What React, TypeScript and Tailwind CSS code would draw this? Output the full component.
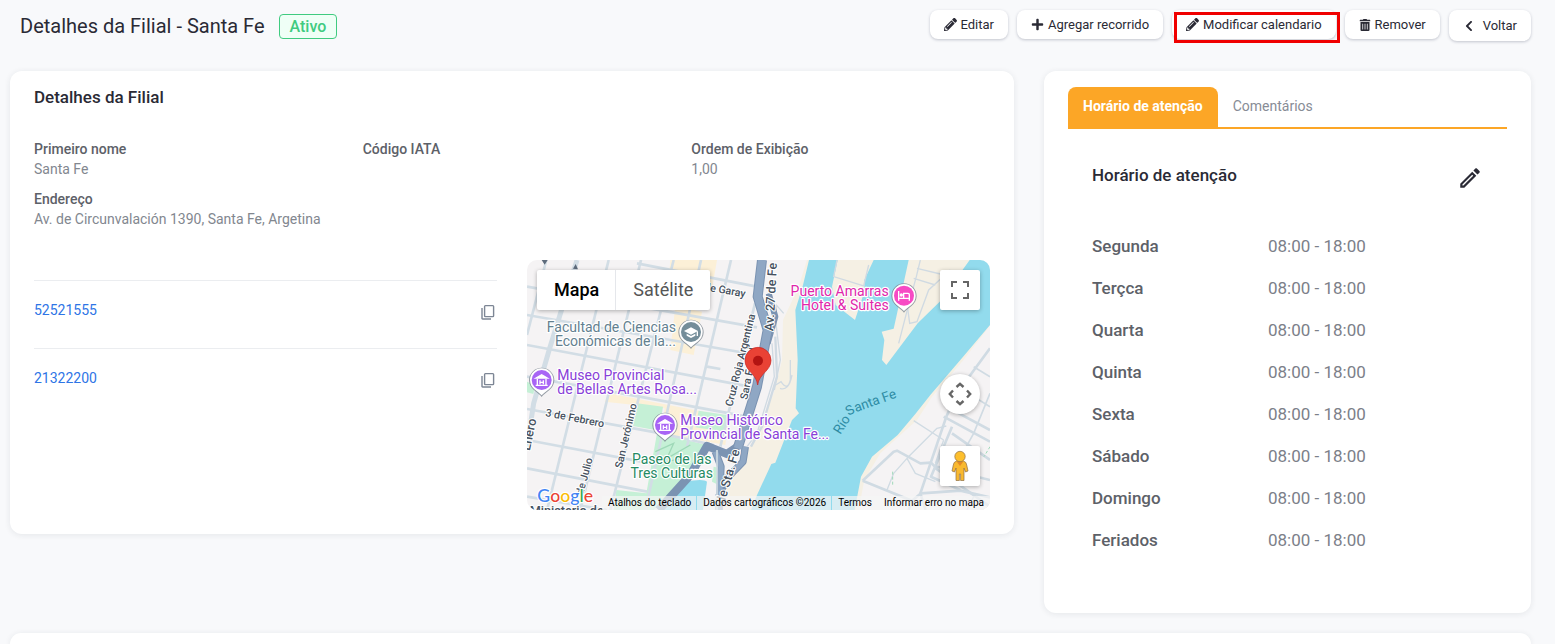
import type { ReactNode } from "react";
import { FaChevronLeft, FaPencilAlt, FaPlus, FaTrashAlt } from "react-icons/fa";
import { MdOutlineEdit } from "react-icons/md";

const schedule = [
  { day: "Segunda", hours: "08:00 - 18:00" },
  { day: "Terçca", hours: "08:00 - 18:00" },
  { day: "Quarta", hours: "08:00 - 18:00" },
  { day: "Quinta", hours: "08:00 - 18:00" },
  { day: "Sexta", hours: "08:00 - 18:00" },
  { day: "Sábado", hours: "08:00 - 18:00" },
  { day: "Domingo", hours: "08:00 - 18:00" },
  { day: "Feriados", hours: "08:00 - 18:00" },
];

const phones = ["52521555", "21322200"];

const cardClasses = "bg-white rounded-xl shadow-[0_1px_6px_rgba(30,40,60,0.09)]";

interface ActionButtonProps {
  icon: ReactNode;
  label: string;
  tall?: boolean;
}

function ActionButton({ icon, label, tall = false }: ActionButtonProps) {
  return (
    <button
      type="button"
      className={`flex items-center rounded-lg bg-white text-[13px] leading-5
        text-[#2a2a35] shadow-[0_1px_3px_rgba(30,40,70,0.25)] hover:bg-gray-50
        ${tall ? "gap-2 px-3.5 h-[31px]" : "gap-1 px-3.5 h-[29px]"}`}
    >
      {icon}
      {label}
    </button>
  );
}

interface FieldProps {
  label: string;
  value?: string;
  className?: string;
}

function Field({ label, value, className = "" }: FieldProps) {
  return (
    <div className={className}>
      <dt className="font-medium text-[#5d6168]">{label}</dt>
      <dd className="text-[#82878f]">{value}</dd>
    </div>
  );
}

function CopyIcon() {
  return (
    <svg width="16" height="16" viewBox="0 0 16 16" fill="none" stroke="currentColor">
      <rect x="4.6" y="1.6" width="9" height="11" rx="0.8" strokeWidth="1.4" />
      <path d="M2 4v10.400a.6.6 0 0 0 .6.6H11" strokeWidth="1.4" />
    </svg>
  );
}

interface PinProps {
  x: number;
  y: number;
  color: string;
  children: ReactNode;
}

function Pin({ x, y, color, children }: PinProps) {
  return (
    <g transform={`translate(${x} ${y})`}>
      <path
        d="M0 51C-9 38-38 28-38 1a38 38 0 0 1 76 0C38 28 9 38 0 51z"
        fill="#77828c"
        opacity="0.75"
      />
      <path d="M0 46C-9 34-35 27-35 0a35 35 0 0 1 70 0C35 27 9 34 0 46z" fill="#fff" />
      <circle r="30" fill={color} />
      {children}
    </g>
  );
}

function MuseumGlyph() {
  return (
    <g fill="none" stroke="#fff" strokeWidth="4">
      <path d="M-17-6 0-16 17-6z" fill="#fff" />
      <path d="M-13-4v19M13-4v19M-18 16h36M-5 1v12M5 1v12M-5 7H5" />
    </g>
  );
}

const streets = [
  "M58 0 0 225",
  "M245 0 60 750",
  "M342 0 160 750",
  "M440 0 250 750",
  "M522 0 355 750",
  "M612 0 480 560",
  "M684 130 580 560",
  "M0 80 690 202",
  "M0 165 690 285",
  "M0 255 680 382",
  "M330 10 690 80",
  "M0 350 350 412 660 470",
  "M0 447 390 518 560 555",
  "M0 540 370 610",
  "M0 625 360 695",
  "M0 710 240 750",
  "M540 320 580 327",
];

function MapDrawing() {
  return (
    <svg
      viewBox="0 0 1389 750"
      preserveAspectRatio="xMidYMid slice"
      className="block h-full w-full"
      fontFamily="Roboto, sans-serif"
      role="img"
      aria-label="Mapa"
    >
      <rect width="1389" height="750" fill="#f5f3f4" />
      {/* Blocks and parks */}
      <g fill="#fcf0d7">
        <path d="M430 0h140l-14 80-130-30z" />
        <path d="M445 140l80 15-25 130-70-15z" />
        <path d="M245 400l360 70-10 85-190-35 8-75-180-20z" />
      </g>
      <g fill="#c5f0d6">
        <path d="M330 430l78 10-12 72-78-14z" />
        <path d="M515 452l90 14-10 50-90-14z" />
        <path d="M390 520l150 35-50 85-110 110H260l8-60 90 10z" />
        <path d="M0 365l25 10-6 27-19-5z" />
        <path d="M560 620l20 5-5 50-20-10z" />
      </g>
      {/* Streets */}
      <g fill="none" stroke="#d2dde5" strokeWidth="8">
        {streets.map((d) => (
          <path key={d} d={d} />
        ))}
        <path d="M150 0 68 265 20 430 0 560" strokeWidth="15" />
      </g>
      {/* River banks */}
      <path
        d="M840 0 815 80 768 180 765 300 740 400 655 590 600 680 560 750H760L1060 500V0z"
        fill="#f5f0e4"
      />
      <path
        d="M846 0 828 75 805 150 812 300 806 445 816 460 795 480 745 608 733 612 690 705 672 750H1030L1389 290V0z"
        fill="#92dbed"
      />
      <path d="M932 0 915 80 926 135 984 180 1012 95 1012 60 1040 0z" fill="#f5f0e4" />
      <path
        d="M1145 0 1108 170 1100 206 1064 215 1072 240 1065 300 1078 315 1172 190 1238 125 1328 0z"
        fill="#f5f0e4"
      />
      <path
        d="M1389 195 1300 300 1210 405 1165 462 1112 525 1035 590 1002 650 983 750H1389z"
        fill="#f5f0e4"
      />
      <path d="M1389 197 1305 305 1215 410 1170 480 1060 580 1012 660 995 750H1389z" fill="#f5f3f4" />
      <path d="M475 665q55-10 65 0l-12 85H395z" fill="#92dbed" />
      <g fill="none" stroke="#d0dae2" strokeWidth="4">
        <path d="M930 0 920 50 1010 78 1025 15" />
        <path d="M1160 55 1225 75M1180 0 1168 50 1142 145 1148 190 1170 185 1205 90 1270 30" />
        <path d="M1142 145 1115 250M1170 25 1240 42" />
        <path d="M770 160 748 135V200L760 300 742 390" />
        <path d="M790 300V360q-8 35-28 5l-16 10M795 345q-10 50-36 40" />
        <path d="M735 250 742 350 690 520 660 560" />
        <path d="M745 230 750 350 705 500 672 560" strokeWidth="7" />
        <path d="M385 575 440 550 420 595 490 555M395 610l70-15" stroke="#9fd9b8" />
      </g>
      {/* East side neighbourhood */}
      <g fill="none" stroke="#d0dbe3" strokeWidth="8" strokeLinejoin="round">
        <path d="M1007 662 1100 575 1110 572 1180 610 1212 608 1222 618 1389 660" />
        <path d="M1007 662 1155 722 1182 700 1300 692 1389 712M1155 722 1145 750" />
        <path d="M1389 265 1290 400 1258 470 1180 700 1196 750" />
        <path d="M1275 500 1212 650 1300 690M1258 440 1389 510M1250 470 1389 545" />
        <path d="M1222 622 1389 740M1275 520 1389 600" />
        <path d="M1300 385 1389 440M1340 320 1389 350M1389 400 1340 520 1290 610" strokeWidth="5" />
        <path
          d="M1100 640 1140 595 1230 505 1258 498M1160 482 1250 540M1140 595 1165 640 1225 665M1100 640 1080 690M1250 540 1225 610M1350 560 1330 620M1320 750 1345 700"
          strokeWidth="4"
        />
        <path d="M1097 635v45M1389 560l-18 30" stroke="#9fd9b8" strokeWidth="3" strokeDasharray="9 6" />
      </g>
      {/* Avenue */}
      <g fill="none" stroke="#7b93b2" strokeLinejoin="round">
        <path d="M705 0 692 110 722 210 690 380 632 565" strokeWidth="30" />
        <path d="M725 100 745 170 722 250" strokeWidth="18" />
        <path d="M632 560 600 582 540 558 490 645 395 750" strokeWidth="25" />
        <path d="M565 575 582 620 576 750M655 560 648 605 600 655 575 710" strokeWidth="22" />
      </g>
      <g fill="none" stroke="#8fa7c4" strokeLinejoin="round">
        <path d="M705 0 692 110 722 210 690 380 632 565" strokeWidth="24" />
        <path d="M565 575 582 620 576 750M655 560 648 605 600 655" strokeWidth="16" />
      </g>
      <path d="M570 570v180" stroke="#d0dbe3" strokeWidth="5" />

      {/* Street names */}
      <g
        fontSize="32"
        fontWeight="500"
        fill="#46515e"
        stroke="#fff"
        strokeWidth="6"
        paintOrder="stroke"
        strokeLinejoin="round"
      >
        <text transform="translate(540 92) rotate(10)">le Garay</text>
        <text transform="translate(616 441) rotate(-76)">Cruz Roja Argentina</text>
        <text transform="translate(661 420) rotate(-79)">Sara Faisal</text>
        <text transform="translate(739 214) rotate(-87)" fontSize="38">
          Av. 27 de Fe
        </text>
        <text transform="translate(54 468) rotate(11)">3 de Febrero</text>
        <text transform="translate(285 626) rotate(-77)">San Jerónimo</text>
        <text transform="translate(168 706) rotate(-75)">de Julio</text>
        <text transform="translate(8 574) rotate(-78)" fontSize="38">
          Enero
        </text>
        <text transform="translate(592 734) rotate(-74)" fontSize="38">
          de Sta. Fe
        </text>
        <text x="8" y="764" fontSize="38">
          Ministerio de
        </text>
      </g>
      <g fill="#5d6b7c">
        <path d="M44 0h18l-9 14zM138 26l8-14 7 16z" />
      </g>
      <g fill="#2d8ba4" fontSize="40">
        <text transform="translate(940 525) rotate(-57)">Río</text>
        <text transform="translate(965 468) rotate(-31)">S</text>
        <text transform="translate(987 457) rotate(-20)">anta Fe</text>
      </g>

      {/* Places */}
      <g
        fontSize="42"
        stroke="#fff"
        strokeWidth="7"
        paintOrder="stroke"
        strokeLinejoin="round"
      >
        <g fill="#63808f" textAnchor="end">
          <text x="447" y="217">Facultad de Ciencias</text>
          <text x="447" y="259">Económicas de la...</text>
        </g>
        <g fill="#e027ab" textAnchor="end">
          <text x="1085" y="109">Puerto Amarras</text>
          <text x="1085" y="151">Hotel &amp; Suites</text>
        </g>
        <g fill="#8840d8">
          <text x="91" y="361">Museo Provincial</text>
          <text x="91" y="403">de Bellas Artes Rosa...</text>
          <text x="460" y="496">Museo Histórico</text>
          <text x="460" y="538">Provincial de Santa Fe...</text>
        </g>
        <g fill="#258a63" textAnchor="middle">
          <text x="434" y="613">Paseo de las</text>
          <text x="434" y="655">Tres Culturas</text>
        </g>
      </g>
      <Pin x={492} y={216} color="#748d99">
        <path d="M-21-3 0-14 21-3 0 8z" fill="#fff" />
        <path d="M-13 5V11L0 18 13 11V5L0 12zM17-2h4v14h-4z" fill="#fff" />
      </Pin>
      <Pin x={44} y={360} color="#a865f5">
        <MuseumGlyph />
      </Pin>
      <Pin x={414} y={495} color="#a865f5">
        <MuseumGlyph />
      </Pin>
      <Pin x={1131} y={107} color="#f74ac4">
        <path d="M-16-14V15M-16 8H16M16 15V-3Q16-7 12-7H-1V7" fill="none" stroke="#fff" strokeWidth="4" />
        <circle cx="-8" cy="-2" r="5" fill="#fff" />
      </Pin>

      {/* Branch marker */}
      <path
        d="M692 375c-4-34-38-42-38-74a39 39 0 0 1 78 0c0 32-36 40-40 74z"
        fill="#e94235"
        stroke="#c5221f"
        strokeWidth="2"
      />
      <circle cx="693" cy="302" r="15" fill="#b31412" />

      <text
        x="31"
        y="725"
        fontSize="53"
        fontFamily="Lato, sans-serif"
        fontWeight="500"
        stroke="#fff"
        strokeWidth="7"
        paintOrder="stroke"
      >
        <tspan fill="#4285f4">G</tspan>
        <tspan fill="#ea4335">o</tspan>
        <tspan fill="#fbbc05">o</tspan>
        <tspan fill="#4285f4">g</tspan>
        <tspan fill="#34a853">l</tspan>
        <tspan fill="#ea4335">e</tspan>
      </text>
    </svg>
  );
}

const mapControlClasses =
  "absolute right-2.5 flex h-10 w-10 items-center justify-center bg-white shadow-[0_1px_4px_rgba(0,0,0,0.3)]";

function BranchMap() {
  return (
    <div className="relative h-[250px] overflow-hidden rounded-[10px]">
      <MapDrawing />

      <div className="absolute left-2.5 top-2.5 flex h-10 rounded-xs bg-white text-lg shadow-[0_1px_4px_rgba(0,0,0,0.3)]">
        <button type="button" className="pl-[17px] pr-4 font-medium text-black">
          Mapa
        </button>
        <button type="button" className="border-l border-gray-200 px-[17px] text-[#565656]">
          Satélite
        </button>
      </div>

      <button
        type="button"
        aria-label="Tela cheia"
        className={`${mapControlClasses} top-2.5 rounded-xs`}
      >
        <svg width="18" height="18" viewBox="0 0 18 18" fill="#666">
          <path d="M0 0v6h2V2h4V0zm16 0h-4v2h4v4h2V0zm0 16h-4v2h6v-6h-2zM2 12H0v6h6v-2H2z" />
        </svg>
      </button>

      <button
        type="button"
        aria-label="Controles da câmera"
        className={`${mapControlClasses} top-[114px] rounded-full`}
      >
        <svg width="24" height="24" viewBox="0 0 24 24" fill="none" stroke="#666" strokeWidth="2.4">
          <path d="M8.5 5 12 1.8 15.5 5M8.5 19 12 22.2 15.5 19M5 8.5 1.8 12 5 15.5M19 8.5 22.2 12 19 15.5" />
        </svg>
      </button>

      <button
        type="button"
        aria-label="Street View"
        className={`${mapControlClasses} top-[186px] rounded-xs`}
      >
        <svg width="18" height="32" viewBox="0 0 18 32" stroke="#8f7048" strokeWidth="0.7">
          <path
            d="M5.5 11h7q3 1 3.200 4l1.300 6-2.500 1-1.500-4v12.500H9.600V24H8.400v6.500H5V18l-1.500 4L1 21l1.300-6q.2-3 3.200-4z"
            fill="#f9b92f"
          />
          <path d="M5.600 11.500h6.800L9 16z" fill="#e58a26" stroke="none" />
          <circle cx="9" cy="6.500" r="5.200" fill="#fdbf2d" />
        </svg>
      </button>

      <div className="absolute bottom-0 right-0 flex h-3.5 text-[10px] leading-3.5 text-black">
        <button type="button" className="bg-[#f5f5f5]/70 pl-1.5 pr-[5px]">
          Atalhos do teclado
        </button>
        <span className="ml-px bg-[#f5f5f5]/70 pl-1.5 pr-[5px]">Dados cartográficos ©2026</span>
        <a href="#termos" className="ml-px bg-[#f5f5f5]/70 px-1.5">
          Termos
        </a>
        <a href="#erro" className="bg-[#f5f5f5]/70 px-1.5">
          Informar erro no mapa
        </a>
      </div>
    </div>
  );
}

export default function App() {
  return (
    <div className="flex min-h-screen flex-col bg-[#f8f9fb] pl-2.5 pr-6 font-[Roboto,sans-serif] text-sm leading-5 text-[#2a2a35]">
      {/* Header */}
      <header className="flex items-start justify-between pb-[30px] pt-2.5">
        <div className="flex items-center gap-3.5 pl-2.5 pt-0.5">
          <h1 className="text-xl leading-7">Detalhes da Filial - Santa Fe</h1>
          <span className="h-[25px] rounded border border-[#40cb80] bg-[#effff6] px-2.5 text-base font-medium leading-6 text-[#40cb80]">
            Ativo
          </span>
        </div>
        <div className="flex items-start gap-[9px]">
          <ActionButton icon={<FaPencilAlt size={13} />} label="Editar" />
          <ActionButton icon={<FaPlus size={13} />} label="Agregar recorrido" />
          <div className="relative">
            <ActionButton icon={<FaPencilAlt size={13} />} label="Modificar calendario" />
            <span className="pointer-events-none absolute -right-1 left-0.5 top-0.5 h-[31px] border-3 border-[#f00000]" />
          </div>
          <ActionButton icon={<FaTrashAlt size={12} />} label="Remover" />
          <ActionButton icon={<FaChevronLeft size={12} />} label="Voltar" tall />
        </div>
      </header>

      <main className="grid grid-cols-[1004fr_487fr] items-start gap-[30px]">
        {/* Branch details */}
        <section className={`${cardClasses} px-6 pb-6 pt-4`}>
          <h2 className="text-[17px] font-medium leading-5">Detalhes da Filial</h2>
          <dl className="mt-8 grid grid-cols-3 gap-x-[30px] gap-y-2.5">
            <Field label="Primeiro nome" value="Santa Fe" />
            <Field label="Código IATA" />
            <Field label="Ordem de Exibição" value="1,00" />
            <Field
              label="Endereço"
              value="Av. de Circunvalación 1390, Santa Fe, Argetina"
              className="col-span-3"
            />
          </dl>

          <div className="mt-[31px] grid grid-cols-2 gap-[30px]">
            <ul className="pt-5">
              {phones.map((phone) => (
                <li
                  key={phone}
                  className="flex h-[68px] items-start justify-between border-t border-[#ebedf0] pt-[19px]"
                >
                  <a href={`tel:${phone}`} className="text-[#2e75e6]">
                    {phone}
                  </a>
                  <button
                    type="button"
                    aria-label={`Copiar ${phone}`}
                    className="pr-px pt-1 text-[#7d8695]"
                  >
                    <CopyIcon />
                  </button>
                </li>
              ))}
            </ul>
            <BranchMap />
          </div>
        </section>

        {/* Opening hours */}
        <section className={`${cardClasses} px-6 pb-[52px] pt-4`}>
          <div role="tablist" className="flex border-b-2 border-[#fca626]">
            <button
              type="button"
              role="tab"
              aria-selected="true"
              className="h-10 rounded-t-lg bg-[#fca626] px-[15px] pb-0.5 font-bold text-white"
            >
              Horário de atenção
            </button>
            <button
              type="button"
              role="tab"
              aria-selected="false"
              className="h-10 px-[15px] pb-0.5 text-[#878c96]"
            >
              Comentários
            </button>
          </div>

          <div className="px-6 pt-8">
            <div className="flex items-start justify-between">
              <h2 className="pt-1 text-[17px] font-medium leading-5">Horário de atenção</h2>
              <button type="button" aria-label="Editar horário" className="pt-1">
                <MdOutlineEdit size={26} />
              </button>
            </div>
            <table className="mt-[34px] w-full text-left text-[17px]">
              <tbody>
                {schedule.map(({ day, hours }) => (
                  <tr key={day} className="h-[42px]">
                    <th scope="row" className="w-[176px] font-medium text-[#5d6168]">
                      {day}
                    </th>
                    <td className="text-[#7c8089]">{hours}</td>
                  </tr>
                ))}
              </tbody>
            </table>
          </div>
        </section>
      </main>

      <section className="mt-5 flex-1 rounded-t-xl bg-white shadow-[0_1px_6px_rgba(30,40,60,0.09)]" />
    </div>
  );
}
